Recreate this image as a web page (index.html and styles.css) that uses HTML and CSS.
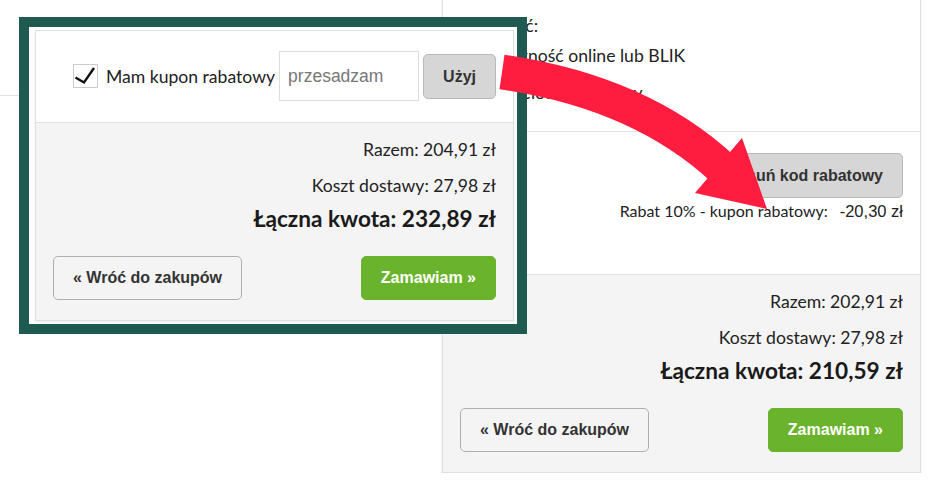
FILE: index.html
```html
<!DOCTYPE html>
<html lang="pl">
<head>
    <meta charset="UTF-8">
    <meta name="viewport" content="width=device-width, initial-scale=1.0">
    <title>Koszyk</title>
    <link rel="stylesheet" href="styles.css">
</head>
<body>
    <div class="page">
        <div class="side">
            <div class="side-row"></div>
        </div>

        <div class="cart">
            <div class="cart-section pay">
                <p class="pay-title">Płatność:</p>
                <label class="pay-option"><span class="radio"></span>Płatność online lub BLIK</label>
                <label class="pay-option"><span class="radio"></span>Przelew tradycyjny</label>
            </div>
            <div class="cart-section coupon-applied">
                <button class="btn btn-grey">Usuń kod rabatowy</button>
                <div class="discount">Rabat 10% - kupon rabatowy:<span class="discount-value">-20,30 zł</span></div>
            </div>
            <div class="cart-section summary">
                <p class="sum-line">Razem: 202,91 zł</p>
                <p class="sum-line">Koszt dostawy: 27,98 zł</p>
                <p class="sum-total">Łączna kwota: 210,59 zł</p>
                <div class="cart-actions">
                    <button class="btn btn-outline">&laquo; Wróć do zakupów</button>
                    <button class="btn btn-green">Zamawiam &raquo;</button>
                </div>
            </div>
        </div>
    </div>

    <!-- cart before the coupon was applied -->
    <div class="callout">
        <div class="cart">
            <div class="cart-section coupon-form">
                <label class="check">
                    <span class="check-box">
                        <svg width="23" height="22" viewBox="0 0 23 22"><path d="M1.5 12.5 L10 17.5 L20 3" fill="none" stroke="#111" stroke-width="2.4" stroke-linejoin="miter"/></svg>
                    </span>
                    Mam kupon rabatowy
                </label>
                <input class="coupon-input" type="text" placeholder="przesadzam">
                <button class="btn btn-grey">Użyj</button>
            </div>
            <div class="cart-section summary">
                <p class="sum-line">Razem: 204,91 zł</p>
                <p class="sum-line">Koszt dostawy: 27,98 zł</p>
                <p class="sum-total">Łączna kwota: 232,89 zł</p>
                <div class="cart-actions">
                    <button class="btn btn-outline">&laquo; Wróć do zakupów</button>
                    <button class="btn btn-green">Zamawiam &raquo;</button>
                </div>
            </div>
        </div>
    </div>

    <svg class="arrow" width="939" height="488" viewBox="0 0 939 488">
        <path d="M502 72 Q640 92 723 169" fill="none" stroke="#fe1c3f" stroke-width="35"/>
        <polygon points="742,138 695,193 767,209" fill="#fe1c3f"/>
    </svg>
</body>
</html>
```

FILE: styles.css
```css
* {
    box-sizing: border-box;
}
body {
    margin: 0;
    background: #fff;
    font-family: Lato, "Open Sans", sans-serif;
    font-size: 17.6px;
    color: #222;
}
p {
    margin: 0;
}
.page {
    display: flex;
    margin-top: -12px;
}
.side {
    width: 442px;
    flex-shrink: 0;
}
.side-row {
    height: 108px;
    border-bottom: 1px solid #e2e2e2;
}

/* cart box */
.cart {
    width: 479px;
    background: #fff;
    border: 1px solid #e0e0e0;
    box-shadow: 0 1px 3px rgba(0, 0, 0, 0.08);
}
.cart-section {
    padding: 0 17px;
}
.cart-section + .cart-section {
    border-top: 1px solid #e0e0e0;
}
.pay {
    padding: 25px 17px 26px 24px;
    line-height: 24px;
}
.pay-title {
    margin-bottom: 6px;
}
.pay-option {
    display: flex;
    align-items: center;
    gap: 12px;
    margin-bottom: 13px;
}
.pay-option:last-child {
    margin-bottom: 0;
}
.radio {
    width: 18px;
    height: 18px;
    border: 1px solid #999;
    border-radius: 50%;
}
.coupon-applied {
    display: flex;
    flex-direction: column;
    align-items: flex-end;
    padding-top: 21px;
    padding-bottom: 53px;
}
.discount {
    margin-top: 3px;
    font-size: 16px;
    line-height: 20px;
}
.discount-value {
    margin-left: 12px;
    font-family: "Liberation Sans", Arial, sans-serif;
    font-size: 16.5px;
}
.summary {
    background: #f4f4f4;
    text-align: right;
    padding-top: 15px;
    padding-bottom: 20px;
}
.sum-line {
    line-height: 24px;
    margin-bottom: 12px;
}
.sum-line + .sum-line {
    margin-bottom: 7px;
}
.sum-total {
    font-size: 22.6px;
    font-weight: bold;
    line-height: 28px;
    color: #1a1a1a;
    margin-bottom: 23px;
}
.cart-actions {
    display: flex;
    justify-content: space-between;
}

/* buttons */
.btn {
    font-family: "Liberation Sans", Arial, sans-serif;
    font-size: 16px;
    font-weight: bold;
    line-height: 20px;
    padding: 11px 19px;
    border: 1px solid #b0b0b0;
    border-radius: 5px;
    color: #333;
    background: transparent;
}
.btn-grey {
    background: #d6d6d6;
    border-color: #b8b8b8;
    padding-top: 12px;
}
.btn-green {
    background: #6ab42d;
    border-color: #6ab42d;
    color: #fff;
}

/* coupon form */
.coupon-form {
    display: flex;
    align-items: center;
    justify-content: flex-end;
    padding-top: 20px;
    padding-bottom: 21px;
}
.check {
    display: flex;
    align-items: center;
    gap: 8px;
    margin-right: 4px;
}
.check-box {
    width: 25px;
    height: 24px;
    border: 1px solid #ccc;
}
.check-box svg {
    display: block;
}
.coupon-input {
    width: 140px;
    height: 50px;
    border: 1px solid #ddd;
    padding: 0 8px;
    margin-right: 4px;
    font-family: "Liberation Sans", Arial, sans-serif;
    font-size: 17.5px;
}
.coupon-input::placeholder {
    color: #777;
}

/* highlighted snippet */
.callout {
    position: absolute;
    left: 19px;
    top: 17px;
    width: 508px;
    height: 317px;
    padding: 3px 0 0 6px;
    border: 10px solid #1f5a50;
    background: #fff;
    overflow: hidden;
}
.arrow {
    position: absolute;
    left: 0;
    top: 0;
    pointer-events: none;
}
```
